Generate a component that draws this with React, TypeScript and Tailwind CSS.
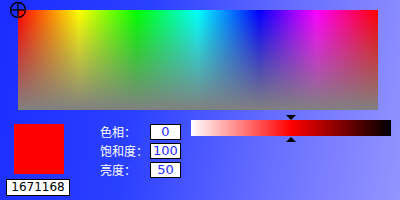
import React from 'react';

const ColorPicker = () => {
  const hue = 0;
  const sat = 100;
  const light = 50;
  const value = 1671168;

  return (
    <div className="relative w-[400px] h-[200px] overflow-hidden bg-[linear-gradient(100deg,#1a2cff_0%,#2a40ff_35%,#6a70ff_70%,#9494ff_100%)] font-['DejaVu_Sans','Noto_Sans_CJK_SC',sans-serif]">
      {/* spectrum */}
      <div className="pl-[18px] pt-[10px]">
        <div className="relative w-[360px] h-[100px] bg-[linear-gradient(to_right,#ff0000,#ffff00_17%,#00ff00_33%,#00ffff_50%,#0000ff_67%,#ff00ff_83%,#ff0000)]">
          <div className="absolute inset-0 bg-[linear-gradient(to_bottom,rgba(128,128,128,0),#808080)]" />
          <svg className="absolute -left-[9px] -top-[9px]" width="18" height="18" viewBox="0 0 18 18">
            <circle cx="9" cy="9" r="7.5" fill="none" stroke="#000" strokeWidth="1.3" />
            <line x1="1.5" y1="9" x2="16.5" y2="9" stroke="#000" strokeWidth="1.3" />
            <line x1="9" y1="1.5" x2="9" y2="16.5" stroke="#000" strokeWidth="1.3" />
          </svg>
        </div>
      </div>

      <div className="flex mt-[14px]">
        {/* swatch + value */}
        <div className="flex flex-col ml-[6px] w-[64px]">
          <div className="ml-[8px] w-[50px] h-[50px] bg-[#ff0000]" />
          <div className="mt-[5px] h-[17px] border border-black bg-white text-[12px] leading-[15px] text-black text-center">
            {value}
          </div>
        </div>

        {/* HSL fields */}
        <div className="ml-[30px] flex flex-col gap-[3px]">
          {[
            ['色相：', hue],
            ['饱和度：', sat],
            ['亮度：', light],
          ].map(([label, v]) => (
            <div key={label as string} className="flex items-center h-[16px]">
              <span className="w-[50px] text-white text-[12px] font-['Noto_Sans_CJK_SC',sans-serif] leading-none">{label}</span>
              <div className="w-[31px] h-[16px] border border-black bg-white text-[13px] leading-[14px] text-center text-[#2a2aff]">
                {v}
              </div>
            </div>
          ))}
        </div>

        {/* lightness bar */}
        <div className="relative ml-[10px] mt-[-4px] w-[200px] h-[16px] bg-[linear-gradient(to_right,#ffffff,#ff0000_50%,#000000)]">
          <svg className="absolute left-[95px] -top-[5px]" width="10" height="5" viewBox="0 0 10 5">
            <polygon points="0,0 10,0 5,5" fill="#000" />
          </svg>
          <svg className="absolute left-[95px] -bottom-[6px]" width="10" height="5" viewBox="0 0 10 5">
            <polygon points="5,0 10,5 0,5" fill="#000" />
          </svg>
        </div>
      </div>
    </div>
  );
};

export default function App() {
  return <ColorPicker />;
}
